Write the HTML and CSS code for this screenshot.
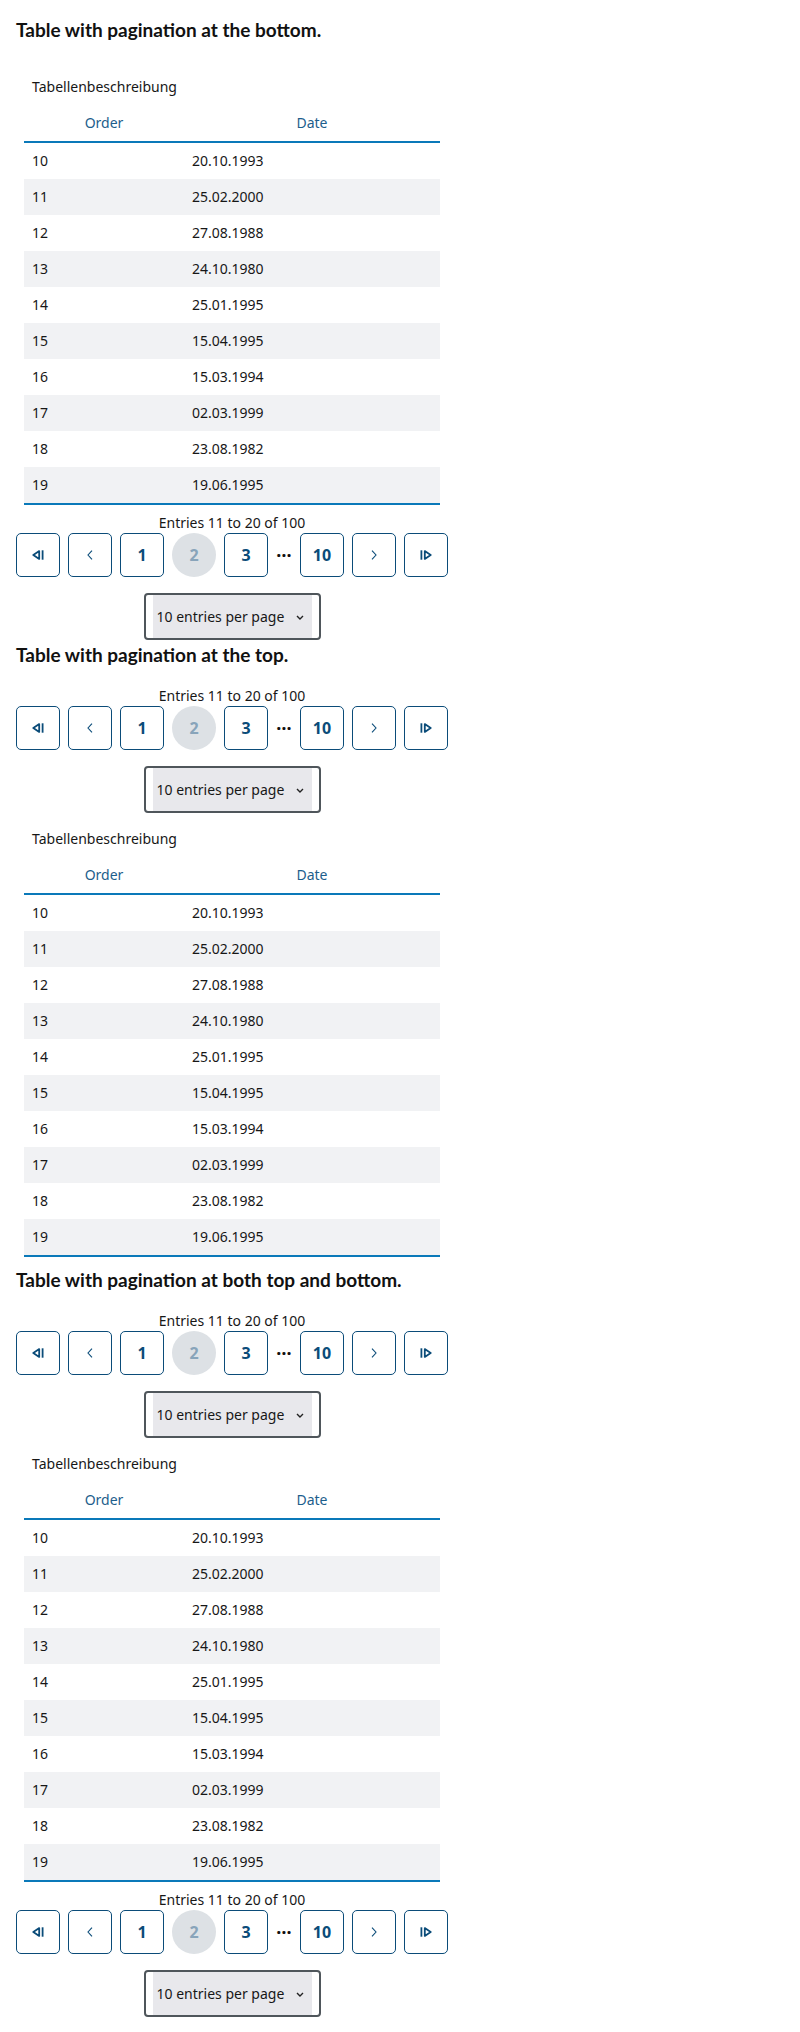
FILE: index.html
```html
<!DOCTYPE html>
<html lang="en">
<head>
<meta charset="utf-8">
<title>Table pagination</title>
<link rel="stylesheet" href="styles.css">
</head>
<body>
<main class="page">

  <section class="demo">
    <h2 class="demo-title">Table with pagination at the bottom.</h2>
    <div class="table-wrap">
      <table class="data-table">
        <caption>Tabellenbeschreibung</caption>
        <thead><tr><th class="col-order">Order</th><th>Date</th></tr></thead>
        <tbody>
          <tr><td>10</td><td>20.10.1993</td></tr>
          <tr><td>11</td><td>25.02.2000</td></tr>
          <tr><td>12</td><td>27.08.1988</td></tr>
          <tr><td>13</td><td>24.10.1980</td></tr>
          <tr><td>14</td><td>25.01.1995</td></tr>
          <tr><td>15</td><td>15.04.1995</td></tr>
          <tr><td>16</td><td>15.03.1994</td></tr>
          <tr><td>17</td><td>02.03.1999</td></tr>
          <tr><td>18</td><td>23.08.1982</td></tr>
          <tr><td>19</td><td>19.06.1995</td></tr>
        </tbody>
      </table>
    </div>
    <nav class="pagination" aria-label="Pagination">
      <p class="pagination-info">Entries 11 to 20 of 100</p>
      <ul class="pager">
        <li><button class="pg-btn" aria-label="First page"><svg class="ic-edge" viewBox="0 0 12 10" aria-hidden="true"><path d="M7.2 1.1 L1.3 5 L7.2 8.9 Z"/><line x1="10.6" y1="0.3" x2="10.6" y2="9.7"/></svg></button></li>
        <li><button class="pg-btn" aria-label="Previous page"><svg class="ic-chev" viewBox="0 0 6 10" aria-hidden="true"><polyline points="5,0.6 1,5 5,9.4"/></svg></button></li>
        <li><button class="pg-btn">1</button></li>
        <li><span class="pg-current" aria-current="page">2</span></li>
        <li><button class="pg-btn">3</button></li>
        <li class="pg-dots">…</li>
        <li><button class="pg-btn">10</button></li>
        <li><button class="pg-btn" aria-label="Next page"><svg class="ic-chev" viewBox="0 0 6 10" aria-hidden="true"><polyline points="1,0.6 5,5 1,9.4"/></svg></button></li>
        <li><button class="pg-btn" aria-label="Last page"><svg class="ic-edge" viewBox="0 0 12 10" aria-hidden="true"><line x1="1.4" y1="0.3" x2="1.4" y2="9.7"/><path d="M4.8 1.1 L10.7 5 L4.8 8.9 Z"/></svg></button></li>
      </ul>
      <div class="page-size">
        <select class="page-size-select"><option>10 entries per page</option><option>20 entries per page</option></select>
        <svg class="select-chev" viewBox="0 0 8 5" aria-hidden="true"><polyline points="1,1 4,4 7,1"/></svg>
      </div>
    </nav>
  </section>

  <section class="demo">
    <h2 class="demo-title">Table with pagination at the top.</h2>
    <nav class="pagination" aria-label="Pagination">
      <p class="pagination-info">Entries 11 to 20 of 100</p>
      <ul class="pager">
        <li><button class="pg-btn" aria-label="First page"><svg class="ic-edge" viewBox="0 0 12 10" aria-hidden="true"><path d="M7.2 1.1 L1.3 5 L7.2 8.9 Z"/><line x1="10.6" y1="0.3" x2="10.6" y2="9.7"/></svg></button></li>
        <li><button class="pg-btn" aria-label="Previous page"><svg class="ic-chev" viewBox="0 0 6 10" aria-hidden="true"><polyline points="5,0.6 1,5 5,9.4"/></svg></button></li>
        <li><button class="pg-btn">1</button></li>
        <li><span class="pg-current" aria-current="page">2</span></li>
        <li><button class="pg-btn">3</button></li>
        <li class="pg-dots">…</li>
        <li><button class="pg-btn">10</button></li>
        <li><button class="pg-btn" aria-label="Next page"><svg class="ic-chev" viewBox="0 0 6 10" aria-hidden="true"><polyline points="1,0.6 5,5 1,9.4"/></svg></button></li>
        <li><button class="pg-btn" aria-label="Last page"><svg class="ic-edge" viewBox="0 0 12 10" aria-hidden="true"><line x1="1.4" y1="0.3" x2="1.4" y2="9.7"/><path d="M4.8 1.1 L10.7 5 L4.8 8.9 Z"/></svg></button></li>
      </ul>
      <div class="page-size">
        <select class="page-size-select"><option>10 entries per page</option><option>20 entries per page</option></select>
        <svg class="select-chev" viewBox="0 0 8 5" aria-hidden="true"><polyline points="1,1 4,4 7,1"/></svg>
      </div>
    </nav>
    <div class="table-wrap">
      <table class="data-table">
        <caption>Tabellenbeschreibung</caption>
        <thead><tr><th class="col-order">Order</th><th>Date</th></tr></thead>
        <tbody>
          <tr><td>10</td><td>20.10.1993</td></tr>
          <tr><td>11</td><td>25.02.2000</td></tr>
          <tr><td>12</td><td>27.08.1988</td></tr>
          <tr><td>13</td><td>24.10.1980</td></tr>
          <tr><td>14</td><td>25.01.1995</td></tr>
          <tr><td>15</td><td>15.04.1995</td></tr>
          <tr><td>16</td><td>15.03.1994</td></tr>
          <tr><td>17</td><td>02.03.1999</td></tr>
          <tr><td>18</td><td>23.08.1982</td></tr>
          <tr><td>19</td><td>19.06.1995</td></tr>
        </tbody>
      </table>
    </div>
  </section>

  <section class="demo">
    <h2 class="demo-title">Table with pagination at both top and bottom.</h2>
    <nav class="pagination" aria-label="Pagination">
      <p class="pagination-info">Entries 11 to 20 of 100</p>
      <ul class="pager">
        <li><button class="pg-btn" aria-label="First page"><svg class="ic-edge" viewBox="0 0 12 10" aria-hidden="true"><path d="M7.2 1.1 L1.3 5 L7.2 8.9 Z"/><line x1="10.6" y1="0.3" x2="10.6" y2="9.7"/></svg></button></li>
        <li><button class="pg-btn" aria-label="Previous page"><svg class="ic-chev" viewBox="0 0 6 10" aria-hidden="true"><polyline points="5,0.6 1,5 5,9.4"/></svg></button></li>
        <li><button class="pg-btn">1</button></li>
        <li><span class="pg-current" aria-current="page">2</span></li>
        <li><button class="pg-btn">3</button></li>
        <li class="pg-dots">…</li>
        <li><button class="pg-btn">10</button></li>
        <li><button class="pg-btn" aria-label="Next page"><svg class="ic-chev" viewBox="0 0 6 10" aria-hidden="true"><polyline points="1,0.6 5,5 1,9.4"/></svg></button></li>
        <li><button class="pg-btn" aria-label="Last page"><svg class="ic-edge" viewBox="0 0 12 10" aria-hidden="true"><line x1="1.4" y1="0.3" x2="1.4" y2="9.7"/><path d="M4.8 1.1 L10.7 5 L4.8 8.9 Z"/></svg></button></li>
      </ul>
      <div class="page-size">
        <select class="page-size-select"><option>10 entries per page</option><option>20 entries per page</option></select>
        <svg class="select-chev" viewBox="0 0 8 5" aria-hidden="true"><polyline points="1,1 4,4 7,1"/></svg>
      </div>
    </nav>
    <div class="table-wrap">
      <table class="data-table">
        <caption>Tabellenbeschreibung</caption>
        <thead><tr><th class="col-order">Order</th><th>Date</th></tr></thead>
        <tbody>
          <tr><td>10</td><td>20.10.1993</td></tr>
          <tr><td>11</td><td>25.02.2000</td></tr>
          <tr><td>12</td><td>27.08.1988</td></tr>
          <tr><td>13</td><td>24.10.1980</td></tr>
          <tr><td>14</td><td>25.01.1995</td></tr>
          <tr><td>15</td><td>15.04.1995</td></tr>
          <tr><td>16</td><td>15.03.1994</td></tr>
          <tr><td>17</td><td>02.03.1999</td></tr>
          <tr><td>18</td><td>23.08.1982</td></tr>
          <tr><td>19</td><td>19.06.1995</td></tr>
        </tbody>
      </table>
    </div>
    <nav class="pagination" aria-label="Pagination">
      <p class="pagination-info">Entries 11 to 20 of 100</p>
      <ul class="pager">
        <li><button class="pg-btn" aria-label="First page"><svg class="ic-edge" viewBox="0 0 12 10" aria-hidden="true"><path d="M7.2 1.1 L1.3 5 L7.2 8.9 Z"/><line x1="10.6" y1="0.3" x2="10.6" y2="9.7"/></svg></button></li>
        <li><button class="pg-btn" aria-label="Previous page"><svg class="ic-chev" viewBox="0 0 6 10" aria-hidden="true"><polyline points="5,0.6 1,5 5,9.4"/></svg></button></li>
        <li><button class="pg-btn">1</button></li>
        <li><span class="pg-current" aria-current="page">2</span></li>
        <li><button class="pg-btn">3</button></li>
        <li class="pg-dots">…</li>
        <li><button class="pg-btn">10</button></li>
        <li><button class="pg-btn" aria-label="Next page"><svg class="ic-chev" viewBox="0 0 6 10" aria-hidden="true"><polyline points="1,0.6 5,5 1,9.4"/></svg></button></li>
        <li><button class="pg-btn" aria-label="Last page"><svg class="ic-edge" viewBox="0 0 12 10" aria-hidden="true"><line x1="1.4" y1="0.3" x2="1.4" y2="9.7"/><path d="M4.8 1.1 L10.7 5 L4.8 8.9 Z"/></svg></button></li>
      </ul>
      <div class="page-size">
        <select class="page-size-select"><option>10 entries per page</option><option>20 entries per page</option></select>
        <svg class="select-chev" viewBox="0 0 8 5" aria-hidden="true"><polyline points="1,1 4,4 7,1"/></svg>
      </div>
    </nav>
  </section>

</main>
</body>
</html>
```

FILE: styles.css
```css
* { box-sizing: border-box; }

html, body {
  margin: 0;
  padding: 0;
  background: #ffffff;
}

body {
  font-family: "Noto Sans", "Open Sans", "Liberation Sans", sans-serif;
  font-size: 14px;
  line-height: 20px;
  color: #171717;
}

.page {
  width: 464px;
  padding: 15px 16px;
}

.demo-title {
  margin: 0 0 16px;
  font-family: Lato, "Noto Sans", sans-serif;
  font-size: 19px;
  line-height: 30px;
  font-weight: 700;
  color: #111111;
  white-space: nowrap;
}

/* ---------- table ---------- */
.table-wrap {
  padding: 8px;
}

.data-table {
  width: 100%;
  border-collapse: collapse;
  table-layout: fixed;
}

.data-table caption {
  text-align: left;
  padding: 8px;
  line-height: 20px;
}

.data-table th {
  padding: 8px;
  line-height: 20px;
  font-weight: 400;
  color: #1d5e8c;
  text-align: center;
  border-bottom: 2px solid #0a79b9;
}

.data-table th.col-order {
  width: 160px;
}

.data-table td {
  padding: 8px;
  line-height: 20px;
  text-align: left;
}

.data-table tbody tr:nth-child(even) {
  background: #f1f2f4;
}

.data-table tbody tr:last-child td {
  border-bottom: 2px solid #0a79b9;
}

/* ---------- pagination ---------- */
.pagination {
  display: flex;
  flex-direction: column;
  align-items: center;
}

.pagination-info {
  margin: 0;
  line-height: 20px;
  text-align: center;
}

.pager {
  display: flex;
  align-items: center;
  gap: 8px;
  margin: 0;
  padding: 0;
  list-style: none;
}

.pager li {
  display: flex;
}

.pg-btn {
  width: 44px;
  height: 44px;
  display: flex;
  align-items: center;
  justify-content: center;
  padding: 0;
  border: 1px solid #0b4c79;
  border-radius: 5px;
  background: #ffffff;
  color: #0b4c79;
  font-family: inherit;
  font-size: 16px;
  font-weight: 700;
  line-height: 1;
  cursor: pointer;
}

.pg-current {
  width: 44px;
  height: 44px;
  display: flex;
  align-items: center;
  justify-content: center;
  border-radius: 50%;
  background: #dde1e5;
  color: #88a4ba;
  font-size: 16px;
  font-weight: 700;
}

.pg-dots {
  width: 16px;
  justify-content: center;
  padding-bottom: 11px;
  color: #111111;
  font-size: 18px;
  font-weight: 700;
  line-height: 20px;
}

.ic-edge {
  width: 12px;
  height: 10px;
  fill: none;
  stroke: #0b4c79;
  stroke-width: 1.8;
  stroke-linejoin: round;
}

.ic-chev {
  width: 6px;
  height: 10px;
  fill: none;
  stroke: #0b4c79;
  stroke-width: 1.1;
}

.page-size {
  position: relative;
  margin-top: 16px;
  width: 177px;
  height: 47px;
  padding: 0 7px;
  border: 2px solid #4f565b;
  border-radius: 4px;
  background: #ffffff;
}

.page-size-select {
  display: block;
  width: 100%;
  height: 100%;
  margin: 0;
  padding: 0 0 0 4px;
  border: 0;
  border-radius: 0;
  background: #e8e8ec;
  color: #171717;
  font-family: inherit;
  font-size: 14px;
  -webkit-appearance: none;
  appearance: none;
}

.select-chev {
  position: absolute;
  right: 15px;
  top: 50%;
  width: 8px;
  height: 5px;
  margin-top: -2px;
  fill: none;
  stroke: #222222;
  stroke-width: 1.4;
  pointer-events: none;
}
```
